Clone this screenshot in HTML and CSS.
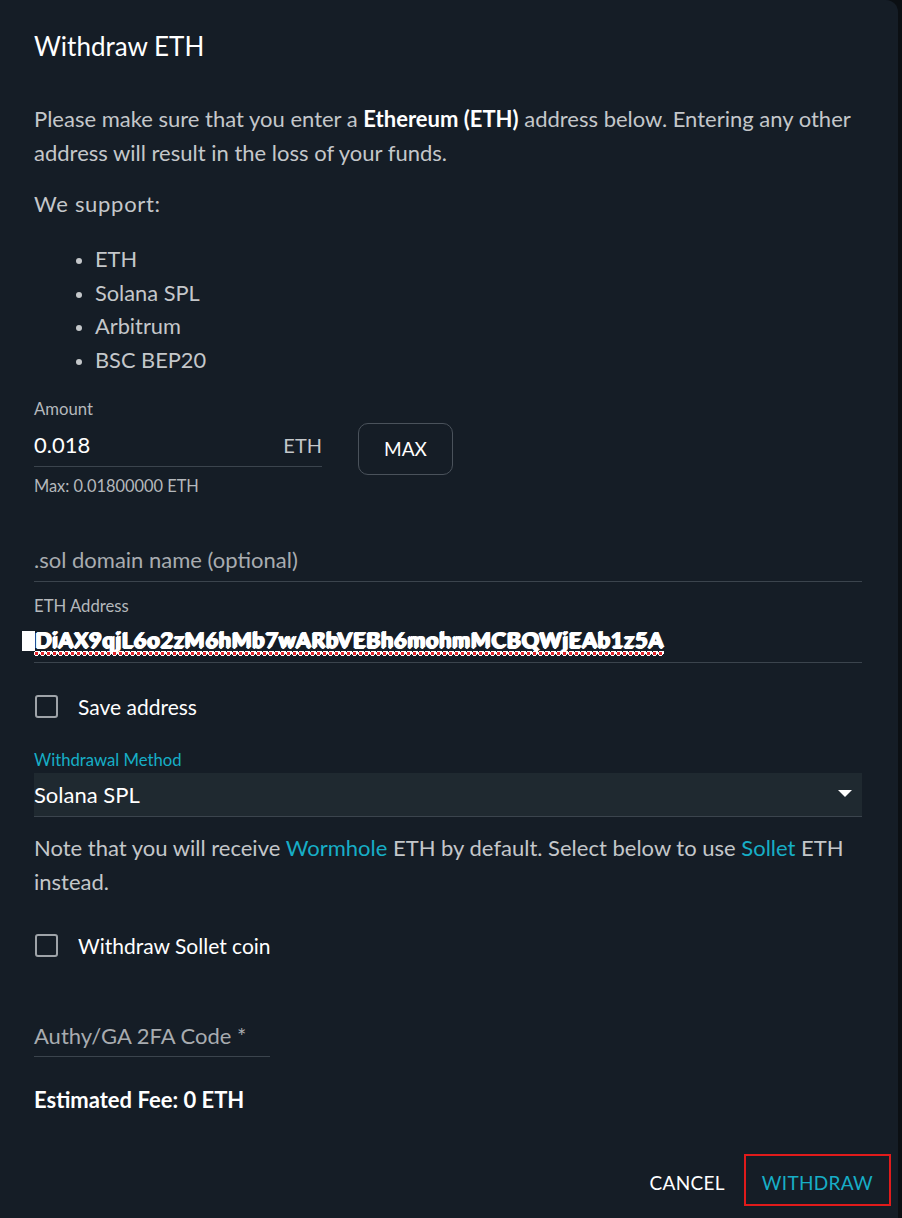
FILE: index.html
```html
<!DOCTYPE html>
<html lang="en">
<head>
<meta charset="utf-8">
<title>Withdraw ETH</title>
<link rel="stylesheet" href="styles.css">
</head>
<body>
<div class="dialog">
  <div class="content">
    <h2 class="title">Withdraw ETH</h2>
    <p class="text intro">Please make sure that you enter a <strong>Ethereum (ETH)</strong> address below. Entering any other address will result in the loss of your funds.</p>
    <p class="text support">We support:</p>
    <ul class="list">
      <li>ETH</li>
      <li>Solana SPL</li>
      <li>Arbitrum</li>
      <li>BSC BEP20</li>
    </ul>

    <div class="amount-row">
      <div class="amount-col">
        <div class="label">Amount</div>
        <div class="field amount-field">
          <span class="value">0.018</span>
          <span class="unit">ETH</span>
        </div>
        <div class="helper">Max: 0.01800000 ETH</div>
      </div>
      <button class="max-btn">MAX</button>
    </div>

    <div class="field domain-field"><span class="placeholder">.sol domain name (optional)</span></div>

    <div class="label addr-label">ETH Address</div>
    <div class="field addr-field"><span class="addr">DiAX9qjL6o2zM6hMb7wARbVEBh6mohmMCBQWjEAb1z5A</span></div>

    <label class="check save-check"><span class="box"></span><span>Save address</span></label>

    <div class="label method-label">Withdrawal Method</div>
    <div class="select">
      <span>Solana SPL</span>
      <svg class="caret" width="14" height="8" viewBox="0 0 14 8"><path d="M0 0 L14 0 L7 7 Z" fill="#ffffff"/></svg>
    </div>

    <p class="text note">Note that you will receive <span class="link">Wormhole</span> ETH by default. Select below to use <span class="link">Sollet</span> ETH instead.</p>

    <label class="check sollet-check"><span class="box"></span><span>Withdraw Sollet coin</span></label>

    <div class="field code-field"><span class="placeholder">Authy/GA 2FA Code *</span></div>

    <div class="fee">Estimated Fee: 0 ETH</div>
  </div>
  <div class="actions">
    <button class="btn cancel">CANCEL</button>
    <button class="btn withdraw">WITHDRAW</button>
  </div>
</div>
</body>
</html>
```

FILE: styles.css
```css
html, body {
  margin: 0;
  padding: 0;
  background: #0b0f13;
}
body {
  font-family: Lato, "Noto Sans", sans-serif;
  width: 902px;
  height: 1218px;
  overflow: hidden;
}
.dialog {
  width: 898px;
  min-height: 1240px;
  background: #151d26;
  border-radius: 0 12px 0 0;
  box-sizing: border-box;
  padding-top: 30px;
}
.content {
  padding: 0 36px 0 34px;
}
.title {
  margin: 0;
  font-size: 26px;
  line-height: 32px;
  font-weight: 400;
  color: #ffffff;
}
.text {
  margin: 0;
  font-size: 22px;
  line-height: 34px;
  color: #c4c7ca;
}
.text strong {
  color: #ffffff;
  font-weight: 700;
}
.intro {
  margin-top: 40px;
}
.support {
  margin-top: 17px;
  letter-spacing: 0.7px;
}
.list {
  margin: 21px 0 0 0;
  padding-left: 61px;
  font-size: 21.8px;
  line-height: 33.7px;
  color: #c4c7ca;
}
.list li::marker {
  font-size: 18px;
}
.amount-row {
  display: flex;
  align-items: flex-start;
  gap: 36px;
  margin-top: 23px;
}
.amount-col {
  width: 288px;
}
.label {
  font-size: 16.7px;
  line-height: 18px;
  color: #b4b8bc;
}
.field {
  display: flex;
  align-items: center;
  justify-content: space-between;
  font-size: 22px;
  line-height: 28px;
  border-bottom: 1px solid #3b444d;
}
.amount-field {
  margin-top: 13px;
  padding-bottom: 7px;
}
.amount-field .value {
  color: #ffffff;
}
.amount-field .unit {
  color: #c4c7ca;
  font-size: 20px;
}
.helper {
  margin-top: 10px;
  font-size: 16.4px;
  line-height: 18px;
  color: #b4b8bc;
}
.max-btn {
  margin-top: 23px;
  width: 95px;
  height: 52px;
  background: transparent;
  border: 1px solid #4a525b;
  border-radius: 10px;
  color: #ffffff;
  font-family: Lato, "Noto Sans", sans-serif;
  font-size: 19px;
}
.placeholder {
  color: #a8acb0;
}
.domain-field {
  margin-top: 51px;
  padding-bottom: 7px;
}
.addr-label {
  margin-top: 15px;
}
.addr-field {
  margin-top: 11px;
  padding-bottom: 8px;
  justify-content: flex-start;
}
.addr {
  color: #ffffff;
  font-size: 21px;
  letter-spacing: 1.3px;
  text-decoration: underline dotted #e0242a 3px;
  text-underline-offset: 4px;
  text-shadow: 0 -1px 0 #fff, 0 1px 0 #fff, 1px 0 0 #fff, -1px 0 0 #fff, 2px -1px 0 #fff;
}
.addr::before {
  content: "";
  display: inline-block;
  width: 13px;
  height: 20px;
  background: #ffffff;
  margin-left: -12px;
  vertical-align: -3px;
}
.check {
  display: flex;
  align-items: center;
  gap: 20px;
  font-size: 21px;
  line-height: 28px;
  color: #ffffff;
}
.box {
  box-sizing: border-box;
  width: 23px;
  height: 23px;
  margin-left: 1px;
  border: 2px solid #9ea3a8;
  border-radius: 3px;
}
.save-check {
  margin-top: 30px;
}
.method-label {
  margin-top: 30px;
  color: #17aec6;
}
.select {
  margin-top: 4px;
  height: 44px;
  box-sizing: border-box;
  background: #1f2930;
  border-bottom: 1px solid #3b444d;
  display: flex;
  align-items: center;
  justify-content: space-between;
  padding: 0 10px 0 0;
  font-size: 22px;
  color: #ffffff;
}
.caret {
  display: block;
}
.note {
  margin-top: 14px;
}
.link {
  color: #17aec6;
}
.sollet-check {
  margin-top: 33px;
}
.code-field {
  margin-top: 62px;
  width: 236px;
  padding-bottom: 6px;
}
.fee {
  margin-top: 29px;
  font-size: 22px;
  line-height: 28px;
  font-weight: 700;
  color: #ffffff;
}
.actions {
  display: flex;
  justify-content: flex-end;
  margin-top: 40px;
  padding-right: 7px;
}
.btn {
  height: 52px;
  background: transparent;
  border: 2px solid transparent;
  font-family: Lato, "Noto Sans", sans-serif;
  font-size: 19px;
  letter-spacing: 0.3px;
  padding-top: 7px;
  cursor: pointer;
}
.cancel {
  color: #ffffff;
  padding-left: 17px;
  padding-right: 17px;
}
.withdraw {
  color: #17aec6;
  border-color: #e01b1b;
  padding-left: 16px;
  padding-right: 16px;
}
```
